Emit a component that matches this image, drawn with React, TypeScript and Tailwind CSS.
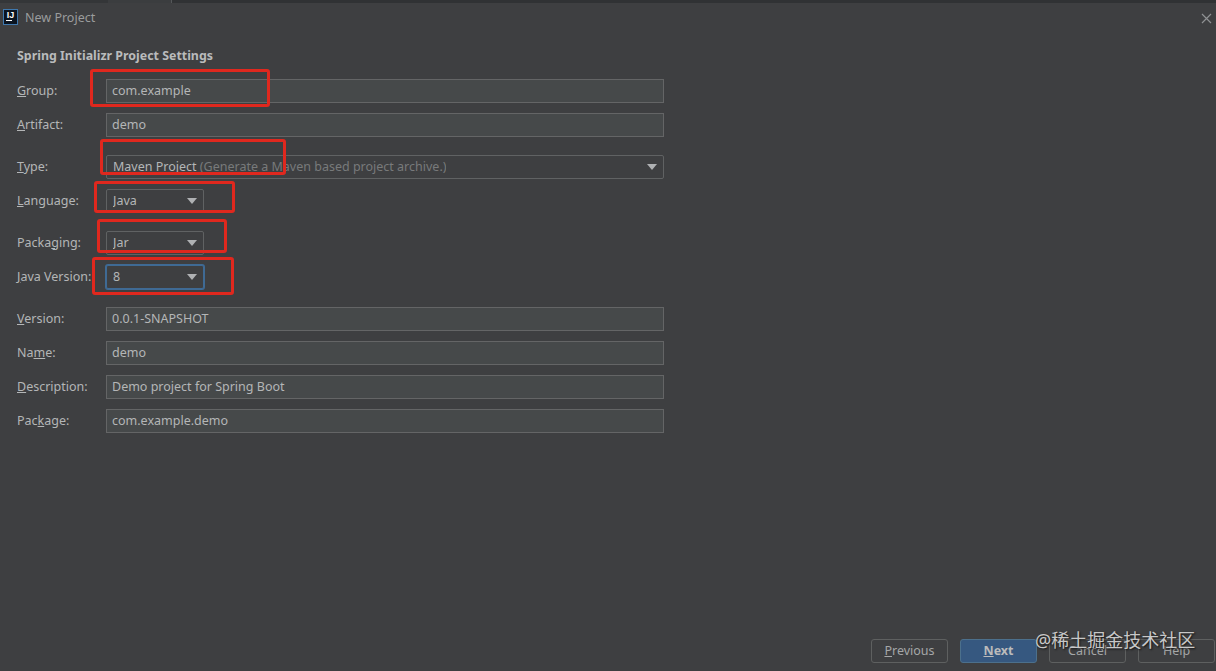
import { FC, ReactNode } from "react";

const FONT = "font-['Noto_Sans','Noto_Sans_CJK_SC',sans-serif]";

type RowT = {
  label: ReactNode;
  marginTop: string;
  children: ReactNode;
};

const Row: FC<RowT> = ({ label, marginTop, children }) => (
  <div className={`flex items-center h-6 ${marginTop}`}>
    <label className="w-[89px] shrink-0 whitespace-nowrap">{label}</label>
    {children}
  </div>
);

const TextField: FC<{ value: string }> = ({ value }) => (
  <div className="w-[558px] h-6 flex items-center px-[5px] bg-[#46494a] border border-[#646566]">
    {value}
  </div>
);

const Caret = () => (
  <svg width="10" height="6" viewBox="0 0 10 6" className="shrink-0">
    <path d="M0 0h10L5 6z" fill="#afb1b3" />
  </svg>
);

const Combo: FC<{ focused?: boolean; wide?: boolean; children: ReactNode }> = ({
  focused,
  wide,
  children,
}) => (
  <div
    className={`h-6 flex items-center justify-between pl-[6px] pr-[6px] bg-[#3e3f41] rounded-[2px] border ${
      wide ? "w-[558px]" : "w-[98px]"
    } ${focused ? "border-[#3f6a94] ring-1 ring-[#3f6a94]" : "border-[#606263]"}`}
  >
    <span className="truncate">{children}</span>
    <Caret />
  </div>
);

const FooterButton: FC<{ primary?: boolean; children: ReactNode }> = ({
  primary,
  children,
}) => (
  <button
    type="button"
    className={`w-[77px] h-6 pt-px rounded-[3px] border text-center text-[12.5px] leading-none ${
      primary
        ? "bg-[#365880] border-[#4c708c] text-[#bbbbbb] font-bold"
        : "bg-[#3e3f41] border-[#5e6060] text-[#a5a7a8]"
    }`}
  >
    {children}
  </button>
);

const RedBox: FC<{ className: string }> = ({ className }) => (
  <div
    className={`absolute border-[3px] border-[#e0281e] rounded-[3px] ${className}`}
  />
);

export default function App() {
  return (
    <div
      className={`relative w-[1216px] h-[671px] overflow-hidden flex flex-col bg-[#3e3f41] text-[12.5px] text-[#b4b6b7] ${FONT}`}
    >
      {/* strip of the window behind */}
      <div className="h-[3px] shrink-0 flex bg-[#303234]">
        <div className="w-[108px] bg-[#343638]" />
        <div className="w-[64px] bg-[#3b3d3f] border-r border-[#55585a]" />
      </div>

      <div className="h-[28px] shrink-0 flex items-center pl-[3px] pr-[4px] mt-[1px]">
        <div className="w-[15px] h-[16px] mb-[2px] bg-[#0b1420] border border-[#3f78ad] flex flex-col items-center justify-start">
          <span className="text-[9px] leading-[10px] font-bold text-white font-['Liberation_Sans',sans-serif]">
            IJ
          </span>
          <span className="self-start ml-[2px] w-[6px] h-[1px] bg-white" />
        </div>
        <span className="ml-[7px] text-[#9a9c9d]">New Project</span>
        <svg width="11" height="11" viewBox="0 0 11 11" className="ml-auto">
          <path d="M1 1l9 9M10 1l-9 9" stroke="#8f9193" strokeWidth="1.2" />
        </svg>
      </div>

      <div className="flex-1 flex flex-col pl-[17px] pt-[15px]">
        <h2 className="h-[18px] leading-[18px] text-[12.4px] font-bold text-[#b9bbbc]">
          Spring Initializr Project Settings
        </h2>

        <Row label={<><u>G</u>roup:</>} marginTop="mt-[14px]">
          <TextField value="com.example" />
        </Row>
        <Row label={<><u>A</u>rtifact:</>} marginTop="mt-[10px]">
          <TextField value="demo" />
        </Row>
        <Row label={<><u>T</u>ype:</>} marginTop="mt-[18px]">
          <Combo wide>
            Maven Project{" "}
            <span className="text-[#787a7b]">
              (Generate a Maven based project archive.)
            </span>
          </Combo>
        </Row>
        <Row label={<><u>L</u>anguage:</>} marginTop="mt-[10px]">
          <Combo>Java</Combo>
        </Row>
        <Row label={<>Packa<u>g</u>ing:</>} marginTop="mt-[18px]">
          <Combo>Jar</Combo>
        </Row>
        <Row label={<><u>J</u>ava Version:</>} marginTop="mt-[10px]">
          <Combo focused>8</Combo>
        </Row>
        <Row label={<><u>V</u>ersion:</>} marginTop="mt-[18px]">
          <TextField value="0.0.1-SNAPSHOT" />
        </Row>
        <Row label={<>Na<u>m</u>e:</>} marginTop="mt-[10px]">
          <TextField value="demo" />
        </Row>
        <Row label={<><u>D</u>escription:</>} marginTop="mt-[10px]">
          <TextField value="Demo project for Spring Boot" />
        </Row>
        <Row label={<>Pac<u>k</u>age:</>} marginTop="mt-[10px]">
          <TextField value="com.example.demo" />
        </Row>
      </div>

      <div className="shrink-0 flex justify-end gap-3 pr-[1px] pb-2">
        <FooterButton><u>P</u>revious</FooterButton>
        <FooterButton primary><u>N</u>ext</FooterButton>
        <FooterButton>Cancel</FooterButton>
        <FooterButton>Help</FooterButton>
      </div>

      {/* red annotations drawn over the screenshot */}
      <RedBox className="left-[90px] top-[69px] w-[180px] h-[38px]" />
      <RedBox className="left-[100px] top-[139px] w-[186px] h-[36px]" />
      <RedBox className="left-[94px] top-[181px] w-[141px] h-[32px]" />
      <RedBox className="left-[97px] top-[219px] w-[130px] h-[34px]" />
      <RedBox className="left-[92px] top-[257px] w-[142px] h-[38px]" />

      {/* site watermark */}
      <div className="absolute left-[1035px] top-[628px] text-[18px] leading-[24px] whitespace-nowrap text-[#c8c8c8] [text-shadow:1px_1px_2px_#111111]">
        @稀土掘金技术社区
      </div>
    </div>
  );
}
